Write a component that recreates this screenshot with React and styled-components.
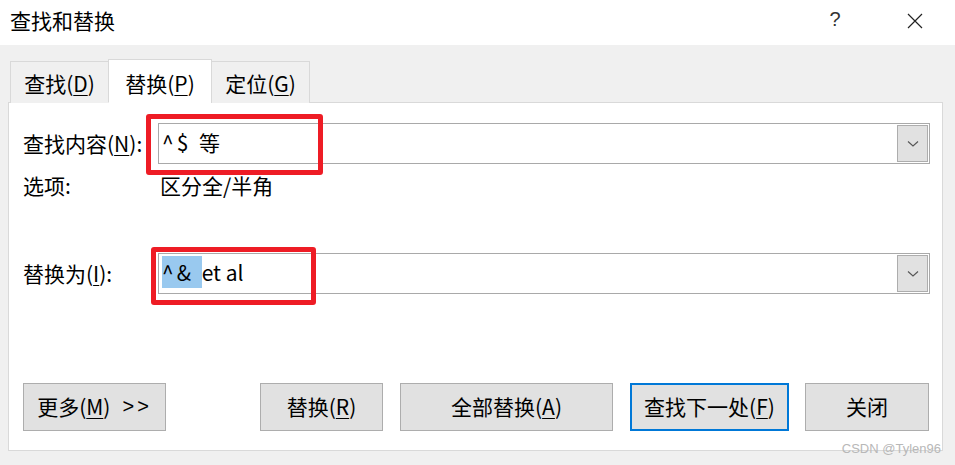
import React from "react";
import styled, { createGlobalStyle } from "styled-components";

const GlobalStyle = createGlobalStyle`
  html, body {
    margin: 0;
    padding: 0;
    background: #f0f0f0;
  }
  body {
    font-family: "Noto Sans CJK SC", "Noto Sans", sans-serif;
    color: #000;
  }
`;

const Dialog = styled.div`
  width: 955px;
  height: 465px;
  display: flex;
  flex-direction: column;
  background: #f0f0f0;
  overflow: hidden;
  position: relative;
`;

const TitleBar = styled.div`
  height: 45px;
  background: #fff;
  display: flex;
  align-items: center;
  padding-left: 10px;
  font-size: 21px;
  flex-shrink: 0;
`;

const Title = styled.div`
  flex: 1;
  margin-top: -5px;
`;

const TitleButton = styled.div`
  width: 80px;
  height: 45px;
  display: flex;
  align-items: center;
  justify-content: center;
  margin-top: ${(p) => (p.$close ? -3 : -6)}px;
  font-family: "Liberation Sans", sans-serif;
  font-size: 20px;
  color: #333;
`;

const Body = styled.div`
  padding: 14px 12px 0 8px;
  display: flex;
  flex-direction: column;
`;

const Tabs = styled.div`
  display: flex;
  align-items: flex-end;
  padding-left: 2px;
  height: 44px;
  position: relative;
  z-index: 1;
  margin-bottom: -1px;
`;

const Tab = styled.div`
  width: ${(p) => p.$w}px;
  height: ${(p) => (p.$active ? 44 : 42)}px;
  box-sizing: border-box;
  border: 1px solid #d9d9d9;
  border-bottom: ${(p) => (p.$active ? "1px solid #fff" : "none")};
  margin-left: ${(p) => (p.$first ? 0 : -1)}px;
  background: ${(p) => (p.$active ? "#fff" : "#f0f0f0")};
  display: flex;
  align-items: center;
  justify-content: center;
  font-size: 21px;
  padding-top: ${(p) => (p.$active ? 3 : 1)}px;
`;

const Key = styled.span`
  text-decoration: underline;
  text-underline-offset: 3px;
  text-decoration-thickness: 1px;
`;

const Panel = styled.div`
  height: 349px;
  box-sizing: border-box;
  border: 1px solid #d9d9d9;
  background: #fff;
  padding: 20px 12px 19px 14px;
  display: flex;
  flex-direction: column;
  font-size: 21px;
`;

const Row = styled.div`
  display: flex;
  align-items: center;
  height: ${(p) => p.$h || 41}px;
  margin-top: ${(p) => p.$mt || 0}px;
`;

const Label = styled.div`
  width: 135px;
  flex-shrink: 0;
  margin-top: -2px;
`;

const Value = styled.div`
  padding-left: 2px;
  margin-top: -2px;
`;

const Combo = styled.div`
  flex: 1;
  height: 41px;
  box-sizing: border-box;
  border: 1px solid #a9a9a9;
  display: flex;
  align-items: stretch;
  position: relative;
`;

const ComboText = styled.div`
  flex: 1;
  display: flex;
  align-items: center;
  padding-left: 3px;
  padding-bottom: 4px;
  font-size: 21px;
  white-space: pre;
`;

const Symbols = styled.span`
  letter-spacing: 3px;
  background: ${(p) => (p.$selected ? "#99c9ef" : "transparent")};
  padding: 1px 0;
`;

const DropButton = styled.div`
  width: 31px;
  margin: 1px;
  box-sizing: border-box;
  border: 1px solid #adadad;
  background: #e1e1e1;
  display: flex;
  align-items: center;
  justify-content: center;
`;

const Mark = styled.div`
  position: absolute;
  left: ${(p) => p.$x}px;
  top: ${(p) => p.$y}px;
  width: ${(p) => p.$w}px;
  height: ${(p) => p.$h}px;
  box-sizing: border-box;
  border: 5px solid #ee1c25;
  border-radius: 3px;
  pointer-events: none;
`;

const Buttons = styled.div`
  margin-top: auto;
  display: flex;
  align-items: center;
  gap: 17px;
`;

const Button = styled.div`
  width: ${(p) => p.$w}px;
  height: 48px;
  box-sizing: border-box;
  border: ${(p) => (p.$focus ? "2px solid #0078d7" : "1px solid #adadad")};
  background: #e1e1e1;
  display: flex;
  align-items: center;
  justify-content: center;
  margin-left: ${(p) => p.$ml || 0}px;
  padding-bottom: 2px;
  font-size: 21px;
`;

const Arrows = styled.span`
  margin-left: 12px;
  font-family: "Liberation Sans", sans-serif;
  font-size: 20px;
  letter-spacing: 3px;
`;

const Watermark = styled.div`
  position: absolute;
  right: 14px;
  bottom: 9px;
  font-family: "Liberation Sans", sans-serif;
  font-size: 13px;
  color: #b8b8b8;
`;

const Chevron = () => (
  <svg width="12" height="8" viewBox="0 0 12 8">
    <path d="M1 1.5 L6 6 L11 1.5" fill="none" stroke="#555" strokeWidth="1.1" />
  </svg>
);

const CloseIcon = () => (
  <svg width="16" height="16" viewBox="0 0 16 16">
    <path d="M1 1 L15 15 M15 1 L1 15" stroke="#222" strokeWidth="1.2" />
  </svg>
);

export default function App() {
  return (
    <Dialog>
      <GlobalStyle />
      <TitleBar>
        <Title>查找和替换</Title>
        <TitleButton>?</TitleButton>
        <TitleButton $close>
          <CloseIcon />
        </TitleButton>
      </TitleBar>
      <Body>
        <Tabs>
          <Tab $w={99} $first>
            查找(<Key>D</Key>)
          </Tab>
          <Tab $w={104} $active>
            替换(<Key>P</Key>)
          </Tab>
          <Tab $w={99}>
            定位(<Key>G</Key>)
          </Tab>
        </Tabs>
        <Panel>
          <Row>
            <Label>
              查找内容(<Key>N</Key>):
            </Label>
            <Combo>
              <ComboText>
                <Symbols>^$ </Symbols>等
              </ComboText>
              <DropButton>
                <Chevron />
              </DropButton>
              <Mark $x={-13} $y={-10} $w={177} $h={61} />
            </Combo>
          </Row>
          <Row $h={22} $mt={11}>
            <Label>选项:</Label>
            <Value>区分全/半角</Value>
          </Row>
          <Row $mt={56}>
            <Label>
              替换为(<Key>I</Key>):
            </Label>
            <Combo>
              <ComboText>
                <Symbols $selected>^&amp; </Symbols>et al
              </ComboText>
              <DropButton>
                <Chevron />
              </DropButton>
              <Mark $x={-8} $y={-7} $w={165} $h={58} />
            </Combo>
          </Row>
          <Buttons>
            <Button $w={143}>
              更多(<Key>M</Key>)<Arrows>&gt;&gt;</Arrows>
            </Button>
            <Button $w={123} $ml={77}>
              替换(<Key>R</Key>)
            </Button>
            <Button $w={213}>
              全部替换(<Key>A</Key>)
            </Button>
            <Button $w={159} $focus>
              查找下一处(<Key>F</Key>)
            </Button>
            <Button $w={124} $ml={-1}>
              关闭
            </Button>
          </Buttons>
        </Panel>
      </Body>
      <Watermark>CSDN @Tylen96</Watermark>
    </Dialog>
  );
}
